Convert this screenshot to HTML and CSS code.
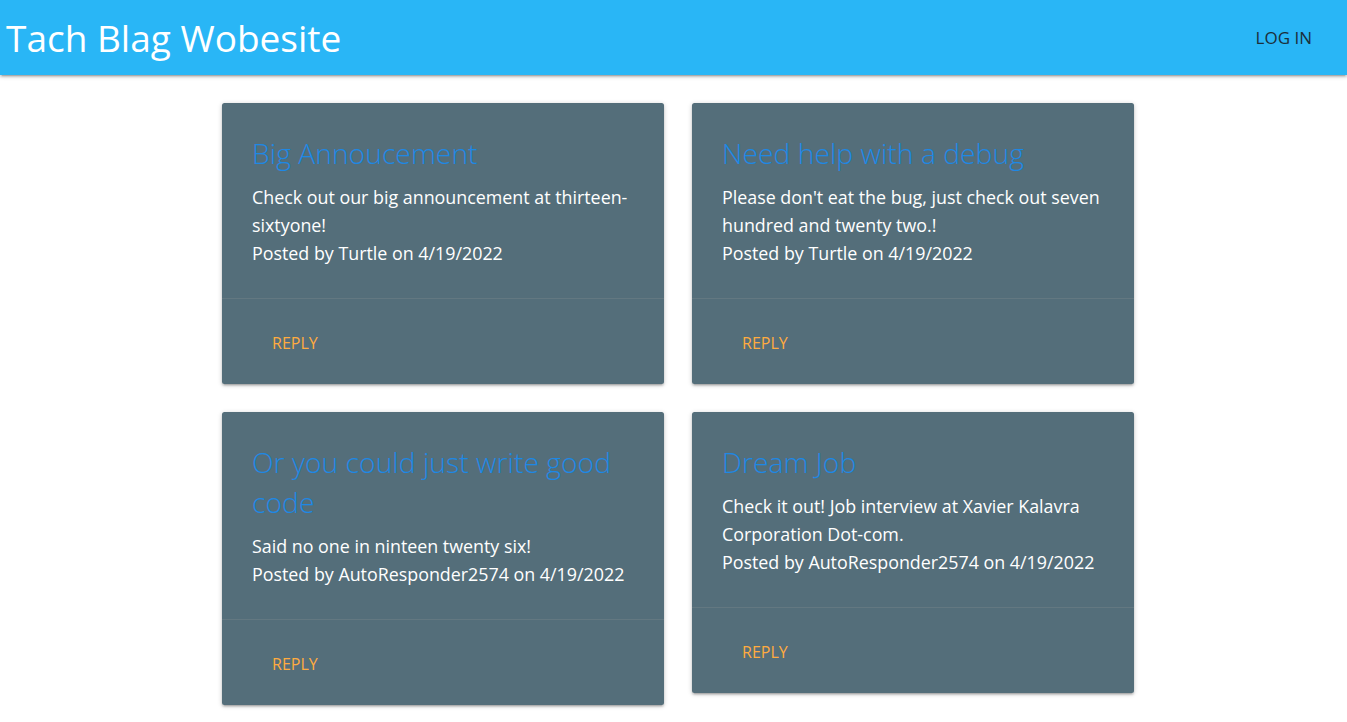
FILE: index.html
```html
<!DOCTYPE html>
<html lang="en">
<head>
<meta charset="utf-8">
<title>Tach Blag Wobesite</title>
<link rel="stylesheet" href="styles.css">
</head>
<body>
<nav class="navbar">
  <a class="brand" href="#">Tach Blag Wobesite</a>
  <a class="nav-link" href="#">LOG IN</a>
</nav>
<main class="posts">
  <div class="column">
    <article class="card">
      <div class="card-content">
        <h2 class="card-title">Big Annoucement</h2>
        <p>Check out our big announcement at thirteen-sixtyone!</p>
        <p>Posted by Turtle on 4/19/2022</p>
      </div>
      <div class="card-action"><a class="btn-flat" href="#">Reply</a></div>
    </article>
    <article class="card">
      <div class="card-content">
        <h2 class="card-title">Or you could just write good code</h2>
        <p>Said no one in ninteen twenty six!</p>
        <p>Posted by AutoResponder2574 on 4/19/2022</p>
      </div>
      <div class="card-action"><a class="btn-flat" href="#">Reply</a></div>
    </article>
  </div>
  <div class="column">
    <article class="card">
      <div class="card-content">
        <h2 class="card-title">Need help with a debug</h2>
        <p>Please don't eat the bug, just check out seven hundred and twenty two.!</p>
        <p>Posted by Turtle on 4/19/2022</p>
      </div>
      <div class="card-action"><a class="btn-flat" href="#">Reply</a></div>
    </article>
    <article class="card">
      <div class="card-content">
        <h2 class="card-title">Dream Job</h2>
        <p>Check it out! Job interview at Xavier Kalavra Corporation Dot-com.</p>
        <p>Posted by AutoResponder2574 on 4/19/2022</p>
      </div>
      <div class="card-action"><a class="btn-flat" href="#">Reply</a></div>
    </article>
  </div>
</main>
</body>
</html>
```
FILE: styles.css
```css
html, body {
  margin: 0;
  padding: 0;
}
body {
  font-family: "Open Sans", "Noto Sans", sans-serif;
  background: #ffffff;
  color: rgba(0,0,0,0.87);
}
.navbar {
  height: 75px;
  background: #29b6f6;
  display: flex;
  align-items: center;
  justify-content: space-between;
  box-shadow: 0 2px 2px 0 rgba(0,0,0,.14), 0 3px 1px -2px rgba(0,0,0,.12), 0 1px 5px 0 rgba(0,0,0,.2);
}
.brand {
  color: #ffffff;
  text-decoration: none;
  font-size: 37px;
  padding-left: 6px;
  line-height: 75px;
}
.nav-link {
  color: #1c2f3a;
  text-decoration: none;
  font-size: 17px;
  padding: 0 35px 0 19px;
  line-height: 75px;
}
.posts {
  width: 912px;
  margin-left: 222px;
  display: grid;
  grid-template-columns: 442px 442px;
  column-gap: 28px;
  padding-top: 19px;
  align-items: start;
}
.column {
  display: flex;
  flex-direction: column;
}
.card {
  background: #546e7a;
  border-radius: 2.5px;
  margin: 9px 0 19px;
  box-shadow: 0 2px 2px 0 rgba(0,0,0,.14), 0 3px 1px -2px rgba(0,0,0,.12), 0 1px 5px 0 rgba(0,0,0,.2);
}
.card-content {
  padding: 30px 30px 31px;
  color: #ffffff;
}
.card-title {
  margin: 0 0 10px;
  font-size: 28.3px;
  font-weight: 300;
  line-height: 40px;
  color: #1e88e5;
}
.card-content p {
  margin: 0;
  font-size: 17.85px;
  line-height: 28px;
}
.card-action {
  border-top: 1px solid rgba(160,160,160,0.2);
  padding: 22px 30px 18px;
}
.btn-flat {
  display: inline-block;
  height: 45px;
  line-height: 45px;
  padding: 0 20px;
  font-size: 16px;
  text-transform: uppercase;
  color: #ffab40;
  text-decoration: none;
}
```
